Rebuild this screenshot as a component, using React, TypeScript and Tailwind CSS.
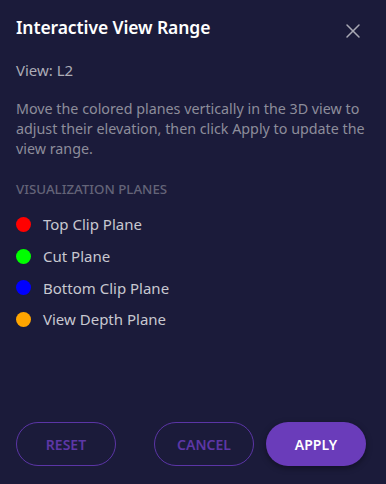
import { X } from "lucide-react";

const planes = [
  { name: "Top Clip Plane", color: "bg-[#ff0000]" },
  { name: "Cut Plane", color: "bg-[#00ff00]" },
  { name: "Bottom Clip Plane", color: "bg-[#0000ff]" },
  { name: "View Depth Plane", color: "bg-[#ffa500]" },
];

export default function App() {
  return (
    <div className="flex h-[484px] w-[386px] flex-col bg-[#1b1b3a] font-['Noto_Sans',sans-serif]">
      <div className="flex items-start justify-between pl-4 pr-[21px] pt-[13px]">
        <h2 className="text-[17.5px] leading-7 font-semibold tracking-[-0.1px] text-white">Interactive View Range</h2>
        <button type="button" className="mt-[6px] text-[#a9a9b4]">
          <X size={24} strokeWidth={1.5} />
        </button>
      </div>

      <p className="mt-[17px] px-4 text-[15px] leading-5 text-[#acacb6]">View: L2</p>

      <p className="mt-[19px] pl-4 pr-3 text-[14.3px] leading-5 text-[#8d8d9a]">
        Move the colored planes vertically in the 3D view to adjust their elevation, then click Apply to update the view range.
      </p>

      <h3 className="mt-[20px] px-4 text-[13.3px] leading-5 font-medium text-[#646478]">VISUALIZATION PLANES</h3>

      <ul className="mt-[15px] flex flex-col gap-[10.7px] px-4">
        {planes.map((p) => (
          <li key={p.name} className="flex h-[21px] items-center gap-3">
            <span className={`h-[15px] w-[15px] rounded-full ${p.color}`} />
            <span className="text-[15px] text-[#c8c8d0]">{p.name}</span>
          </li>
        ))}
      </ul>

      <div className="mt-auto mb-[18px] flex items-center justify-between pl-4 pr-5">
        <button
          type="button"
          className="h-[44px] w-[100px] rounded-full border-[1.5px] border-[#5b35a6] text-[14px] font-semibold text-[#5d37a6]"
        >
          RESET
        </button>
        <div className="flex gap-3">
          <button
            type="button"
            className="h-[44px] w-[100px] rounded-full border-[1.5px] border-[#5b35a6] text-[14px] font-semibold text-[#5d37a6]"
          >
            CANCEL
          </button>
          <button
            type="button"
            className="h-[44px] w-[100px] rounded-full bg-[#6a3cba] text-[14px] font-semibold text-white shadow-[0_2px_6px_rgba(0,0,0,0.4)]"
          >
            APPLY
          </button>
        </div>
      </div>
    </div>
  );
}
